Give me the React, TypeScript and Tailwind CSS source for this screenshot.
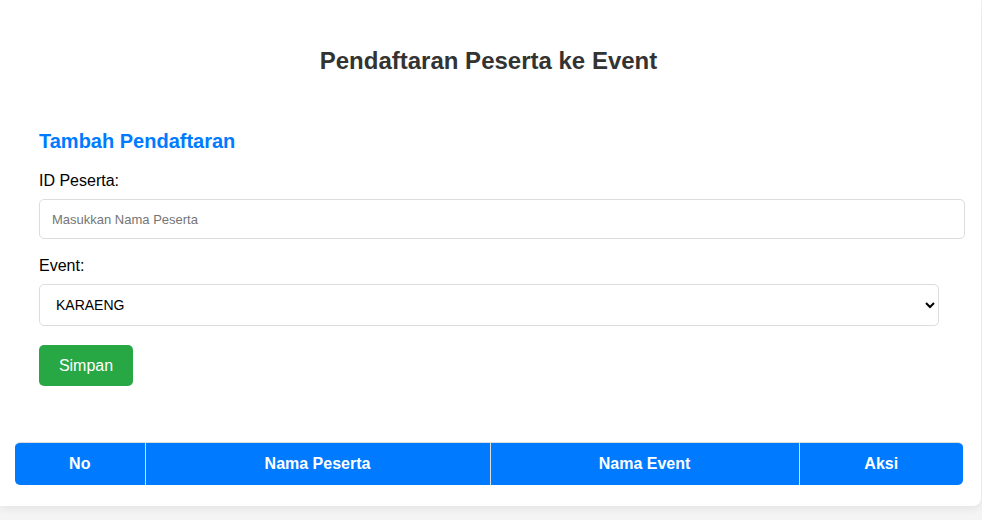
export default function App() {
  return (
    <div className="min-h-[520px] bg-[#f4f4f4] font-['Liberation_Sans',Arial,sans-serif]">
      <div className="w-[981px] rounded-br-lg bg-white px-[15px] pb-[21px] pt-[47px] shadow-[0_2px_10px_rgba(0,0,0,0.08)]">
        <h1 className="pr-[4px] text-center text-[24px] font-bold leading-[28px] text-[#333]">
          Pendaftaran Peserta ke Event
        </h1>

        <div className="mt-[52px] px-[24px]">
          <h2 className="text-[20px] font-bold leading-[28px] text-[#007bff]">Tambah Pendaftaran</h2>

          <label className="mt-[16px] block text-[16px] leading-[20px] text-black">ID Peserta:</label>
          <input
            type="text"
            placeholder="Masukkan Nama Peserta"
            className="mt-[8px] block h-[40px] w-[926px] rounded-[5px] border border-[#ddd] px-[12px] text-[13px] text-black outline-none placeholder:text-[#757575]"
          />

          <label className="mt-[17px] block text-[16px] leading-[20px] text-black">Event:</label>
          <select
            defaultValue="KARAENG"
            className="mt-[8px] block h-[42px] w-[900px] rounded-[5px] border border-[#ddd] bg-white px-[12px] text-[14px] text-black outline-none"
            style={{ appearance: "auto" }}
          >
            <option>KARAENG</option>
          </select>

          <button className="mt-[19px] h-[41px] w-[94px] rounded-[5px] bg-[#28a745] text-[16px] text-white">
            Simpan
          </button>
        </div>

        <div className="mt-[56px] w-[948px] overflow-hidden rounded-[5px] border-t border-[#ddd]">
          <table className="w-full border-collapse">
            <thead>
              <tr className="h-[42px] bg-[#007bff] text-[16px] font-bold text-white">
                <th className="w-[130px] border-r border-[#ddd]">No</th>
                <th className="w-[345px] border-r border-[#ddd]">Nama Peserta</th>
                <th className="w-[309px] border-r border-[#ddd]">Nama Event</th>
                <th>Aksi</th>
              </tr>
            </thead>
          </table>
        </div>
      </div>
    </div>
  );
}
